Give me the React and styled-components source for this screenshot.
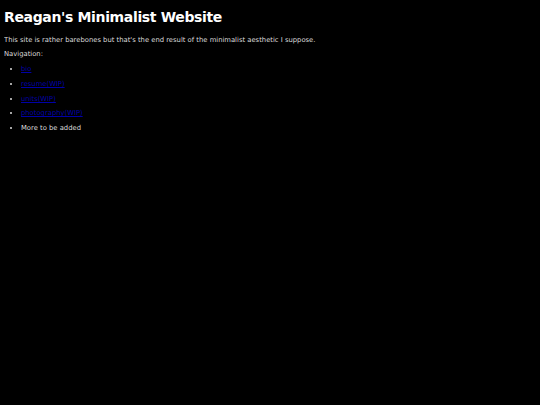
import React from 'react';
import styled, { createGlobalStyle } from 'styled-components';

const GlobalStyle = createGlobalStyle`
  html, body {
    background: #000;
  }
  body {
    margin: 4px;
    color: #dcdcdc;
    font-family: "DejaVu Sans", Verdana, sans-serif;
    font-size: 6.8px;
  }
`;

const Title = styled.h1`
  color: #fff;
  font-size: 14px;
  font-weight: bold;
  letter-spacing: -0.35px;
  margin: 5px 0 11px;
`;

const Text = styled.p`
  margin: 0 0 6px;
  line-height: 8px;
`;

const NavList = styled.ul`
  margin: 7px 0 0;
  padding-left: 17px;
  list-style: disc;
`;

const NavItem = styled.li`
  margin: 0;
  padding: 0;
  & > p {
    margin: 0 0 6.8px;
    line-height: 8px;
  }
`;

const NavLink = styled.a`
  color: #0000a8;
  text-decoration: underline;
`;

const links = [
  { label: 'bio', href: '#bio' },
  { label: 'resume(WIP)', href: '#resume' },
  { label: 'units(WIP)', href: '#units' },
  { label: 'photography(WIP)', href: '#photography' },
];

const App = () => (
  <>
    <GlobalStyle />
    <Title>Reagan's Minimalist Website</Title>
    <Text>This site is rather barebones but that's the end result of the minimalist aesthetic I suppose.</Text>
    <Text>Navigation:</Text>
    <NavList>
      {links.map((l) => (
        <NavItem key={l.label}>
          <p>
            <NavLink href={l.href}>{l.label}</NavLink>
          </p>
        </NavItem>
      ))}
      <NavItem>
        <p>More to be added</p>
      </NavItem>
    </NavList>
  </>
);

export default App;
